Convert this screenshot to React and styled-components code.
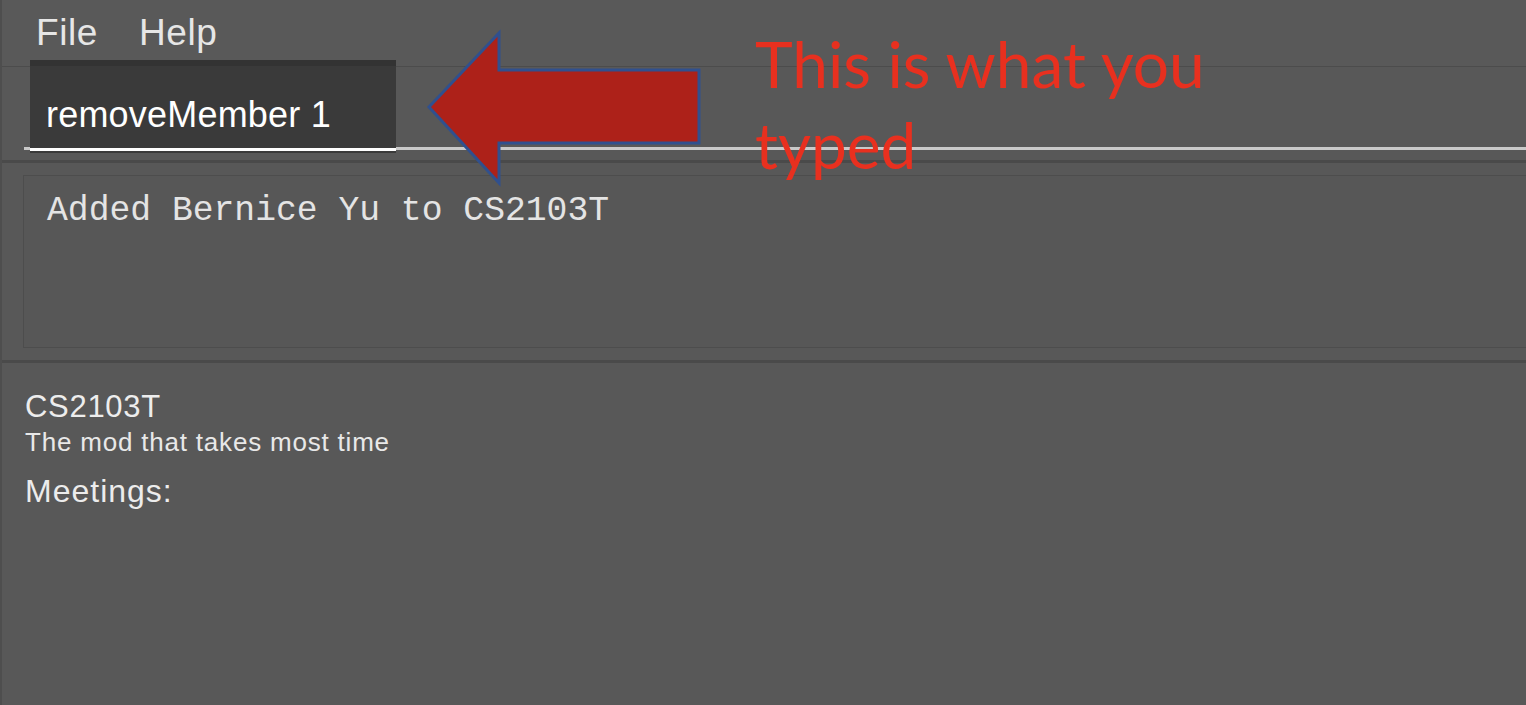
import React from "react";
import styled, { createGlobalStyle } from "styled-components";

const GlobalStyle = createGlobalStyle`
  html, body {
    margin: 0;
    padding: 0;
    background: #585858;
    overflow: hidden;
  }
  #root {
    min-height: 705px;
  }
`;

const Window = styled.div`
  position: relative;
  min-height: 705px;
  background: #585858;
  border-left: 2px solid #4e4e4e;
  font-family: "Liberation Sans", Arial, sans-serif;
  color: #ececec;
  overflow: hidden;
`;

const MenuBar = styled.div`
  display: flex;
  gap: 41px;
  height: 66px;
  padding-left: 34px;
  background: #595959;
  border-bottom: 1px solid #4c4c4c;
`;

const MenuItem = styled.div`
  font-size: 37px;
  line-height: 66px;
  letter-spacing: 0.6px;
  color: #e6e6e6;
`;

const CommandSection = styled.div`
  height: 96px;
  box-sizing: border-box;
  padding-left: 22px;
  border-bottom: 3px solid #4a4a4a;
`;

const CommandField = styled.div`
  display: flex;
  height: 80px;
  border-bottom: 3px solid #c9c9c9;
`;

const TypedBox = styled.div`
  position: relative;
  z-index: 1;
  box-sizing: border-box;
  width: 366px;
  height: 93px;
  margin: -7px 0 -3px 6px;
  padding: 29px 0 0 16px;
  border-top: 6px solid #333333;
  background: linear-gradient(
    to bottom,
    #3a3a3a calc(100% - 5px),
    #ffffff calc(100% - 5px),
    #ffffff calc(100% - 2px),
    #3a3a3a calc(100% - 2px)
  );
  font-size: 36px;
  line-height: 40px;
  letter-spacing: 0.2px;
  color: #ffffff;
  white-space: nowrap;
`;

const ResultSection = styled.div`
  padding: 12px 0 12px 21px;
  border-bottom: 3px solid #4a4a4a;
`;

const ResultBox = styled.div`
  box-sizing: border-box;
  height: 173px;
  padding: 15px 0 0 23px;
  border: 1px solid #4d4d4d;
  border-right: none;
  background: #575757;
  font-family: "Liberation Mono", "Courier New", monospace;
  font-size: 34.7px;
  line-height: 40px;
  color: #e4e4e4;
  white-space: pre;
`;

const PersonPanel = styled.div`
  display: flex;
  flex-direction: column;
  padding: 26px 0 0 23px;
`;

const GroupName = styled.div`
  font-size: 31px;
  line-height: 36px;
  letter-spacing: 0.7px;
  color: #ededed;
`;

const GroupDesc = styled.div`
  margin-top: 2px;
  font-size: 26px;
  line-height: 30px;
  letter-spacing: 0.8px;
  color: #e8e8e8;
`;

const SectionLabel = styled.div`
  margin-top: 15px;
  font-size: 32px;
  line-height: 38px;
  letter-spacing: 1px;
  color: #ececec;
`;

const Overlay = styled.div`
  position: absolute;
  inset: 0;
  z-index: 5;
  pointer-events: none;
`;

const ArrowSvg = styled.svg`
  position: absolute;
  left: 0;
  top: 0;
`;

const Annotation = styled.div`
  position: absolute;
  left: 753px;
  top: 23px;
  font-family: Lato, "Open Sans", sans-serif;
  font-size: 64px;
  line-height: 81px;
  color: #e8301f;
  white-space: nowrap;
`;

export default function App() {
  return (
    <>
      <GlobalStyle />
      <Window>
        <MenuBar>
          <MenuItem>File</MenuItem>
          <MenuItem>Help</MenuItem>
        </MenuBar>
        <CommandSection>
          <CommandField>
            <TypedBox>removeMember 1</TypedBox>
          </CommandField>
        </CommandSection>
        <ResultSection>
          <ResultBox>Added Bernice Yu to CS2103T</ResultBox>
        </ResultSection>
        <PersonPanel>
          <GroupName>CS2103T</GroupName>
          <GroupDesc>The mod that takes most time</GroupDesc>
          <SectionLabel>Meetings:</SectionLabel>
        </PersonPanel>
        <Overlay>
          <ArrowSvg width="760" height="200" viewBox="0 0 760 200">
            <polygon
              points="427,107 497,33 497,70 697,70 697,143 497,143 497,183"
              fill="#ad2119"
              stroke="#30508e"
              strokeWidth="3"
              strokeLinejoin="miter"
            />
          </ArrowSvg>
          <Annotation>
            This is what you
            <br />
            typed
          </Annotation>
        </Overlay>
      </Window>
    </>
  );
}
